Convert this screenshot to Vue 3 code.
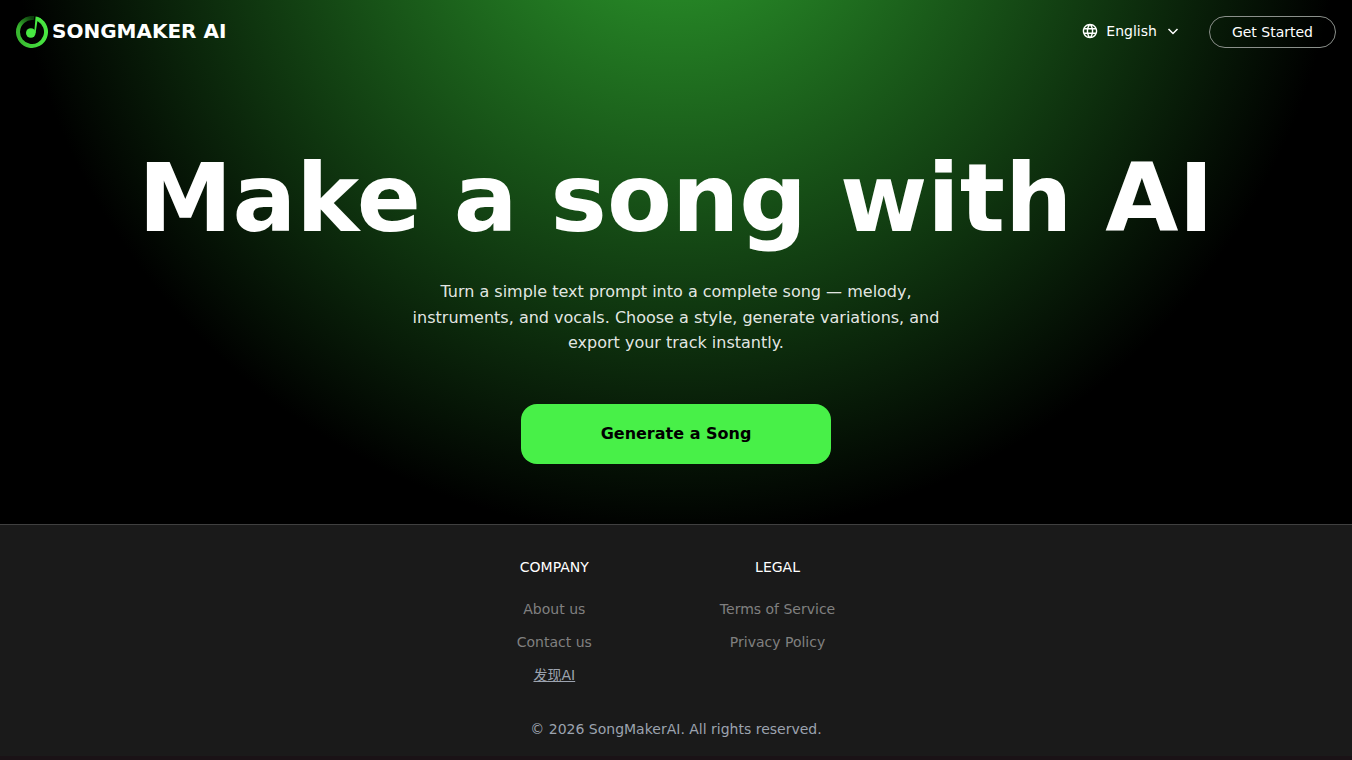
<script setup>
const columns = [
  {
    title: 'COMPANY',
    links: [
      { label: 'About us' },
      { label: 'Contact us' },
      { label: '发现AI', underlined: true },
    ],
  },
  {
    title: 'LEGAL',
    links: [{ label: 'Terms of Service' }, { label: 'Privacy Policy' }],
  },
]
</script>

<template>
  <div class="page">
    <div class="top">
      <header class="bar">
        <a class="brand" href="#">
          <svg class="logo" viewBox="0 0 32 32" aria-hidden="true">
            <defs>
              <linearGradient id="ring" x1="0.9" y1="0" x2="0.1" y2="0.7">
                <stop offset="0" stop-color="#0b3a0b" />
                <stop offset="1" stop-color="#38b52f" />
              </linearGradient>
              <linearGradient id="side" x1="0" y1="0" x2="1" y2="0">
                <stop offset="0" stop-color="#38b52f" />
                <stop offset="1" stop-color="#48e842" />
              </linearGradient>
            </defs>
            <path d="M2 16A14 14 0 0 1 18 2.1" fill="none" stroke="url(#ring)" stroke-width="4" />
            <path d="M2 15.6A14 14 0 1 0 23 3.8" fill="none" stroke="url(#side)" stroke-width="4" />
            <path d="M18.2 17L19.6 0.6C24 1.2 27.5 4 28.4 8.6C25.6 5.8 23.6 5.2 21.4 5.2L19.6 17Z" fill="#48e842" />
            <circle cx="14.8" cy="17" r="4.8" fill="#48e842" />
          </svg>
          <span>SONGMAKER AI</span>
        </a>
        <div class="actions">
          <button class="language" type="button">
            <svg class="globe" viewBox="1 1 22 22" aria-hidden="true">
              <path
                fill="currentColor"
                d="M11.99 2C6.47 2 2 6.48 2 12s4.47 10 9.99 10C17.52 22 22 17.52 22 12S17.52 2 11.99 2zm6.93 6h-2.95c-.32-1.25-.78-2.45-1.38-3.56 1.84.63 3.37 1.91 4.33 3.56zM12 4.04c.83 1.2 1.48 2.53 1.91 3.96h-3.82c.43-1.43 1.08-2.76 1.91-3.96zM4.26 14C4.1 13.36 4 12.69 4 12s.1-1.36.26-2h3.38c-.08.66-.14 1.32-.14 2s.06 1.34.14 2H4.26zm.82 2h2.95c.32 1.25.78 2.45 1.38 3.56-1.84-.63-3.37-1.9-4.33-3.56zm2.95-8H5.08c.96-1.66 2.49-2.93 4.33-3.56C8.81 5.55 8.35 6.75 8.03 8zM12 19.96c-.83-1.2-1.48-2.53-1.91-3.96h3.82c-.43 1.43-1.08 2.76-1.91 3.96zM14.34 14H9.66c-.09-.66-.16-1.32-.16-2s.07-1.35.16-2h4.68c.09.65.16 1.32.16 2s-.07 1.34-.16 2zm.25 5.56c.6-1.11 1.06-2.31 1.38-3.56h2.95c-.96 1.65-2.49 2.93-4.33 3.56zM16.36 14c.08-.66.14-1.32.14-2s-.06-1.34-.14-2h3.38c.16.64.26 1.31.26 2s-.1 1.36-.26 2h-3.38z"
              />
            </svg>
            <span>English</span>
            <svg class="chevron" viewBox="0 0 16 16" aria-hidden="true">
              <path d="M3.5 6L8 10.5L12.5 6" fill="none" stroke="currentColor" stroke-width="1.5" />
            </svg>
          </button>
          <button class="start" type="button">Get Started</button>
        </div>
      </header>

      <main class="hero">
        <h1>Make a song with AI</h1>
        <p>
          Turn a simple text prompt into a complete song — melody, instruments, and vocals.
          Choose a style, generate variations, and export your track instantly.
        </p>
        <button class="generate" type="button">Generate a Song</button>
      </main>
    </div>

    <footer>
      <nav class="columns">
        <section v-for="column in columns" :key="column.title">
          <h2>{{ column.title }}</h2>
          <ul>
            <li v-for="link in column.links" :key="link.label">
              <a href="#" :class="{ underlined: link.underlined }">{{ link.label }}</a>
            </li>
          </ul>
        </section>
      </nav>
      <p class="copyright">© 2026 SongMakerAI. All rights reserved.</p>
    </footer>
  </div>
</template>

<style>
body {
  margin: 0;
  background: #1a1216;
}
</style>

<style scoped>
.page {
  font-family: "DejaVu Sans", "Noto Sans CJK SC", sans-serif;
  font-size: 14px;
  line-height: 20px;
  color: #fff;
}

a {
  color: inherit;
  text-decoration: none;
}

button {
  padding: 0;
  border: 0;
  background: none;
  color: inherit;
  font: inherit;
  cursor: pointer;
}

.top {
  background: radial-gradient(circle at 50% -25%, #2ea22e 0%, #000 71%) #000;
}

.bar {
  display: flex;
  align-items: center;
  justify-content: space-between;
  padding: 16px;
}

.brand {
  display: flex;
  align-items: flex-start;
  gap: 4px;
  font-size: 20px;
  font-weight: 700;
  line-height: 30px;
}

.logo {
  width: 32px;
  height: 32px;
}

.actions {
  display: flex;
  align-items: center;
  gap: 28px;
}

.language {
  display: flex;
  align-items: center;
  gap: 8px;
  padding-bottom: 2px;
}

.globe {
  width: 16px;
  height: 16px;
}

.chevron {
  width: 16px;
  height: 16px;
}

.start {
  padding: 5px 22px;
  border: 1px solid #8b908b;
  border-radius: 16px;
}

.hero {
  display: flex;
  flex-direction: column;
  align-items: center;
  padding: 80px 16px 60px;
  text-align: center;
}

h1 {
  margin: 0;
  font-size: 7vw;
  font-weight: 700;
  line-height: 108px;
}

.hero p {
  max-width: 560px;
  margin: 27px 0 48px;
  font-size: 16px;
  line-height: 1.6;
  color: rgba(255, 255, 255, 0.9);
}

.generate {
  padding: 18px 80px;
  border-radius: 16px;
  background: #48f048;
  color: #000;
  font-size: 16px;
  font-weight: 700;
  line-height: 24px;
}

footer {
  padding: 32px 16px 17px;
  border-top: 1px solid #404040;
  background: #1a1a1a;
  text-align: center;
}

.columns {
  display: flex;
  justify-content: center;
  gap: 128px;
}

h2 {
  margin: 0 0 22px;
  font-size: 14px;
  font-weight: 400;
}

ul {
  display: grid;
  gap: 13px;
  margin: 0;
  padding: 0;
  list-style: none;
  color: #808080;
}

.underlined {
  color: #9ca3af;
  text-decoration: underline;
}

.copyright {
  margin: 34px 0 0;
  color: #9ca3af;
}
</style>
